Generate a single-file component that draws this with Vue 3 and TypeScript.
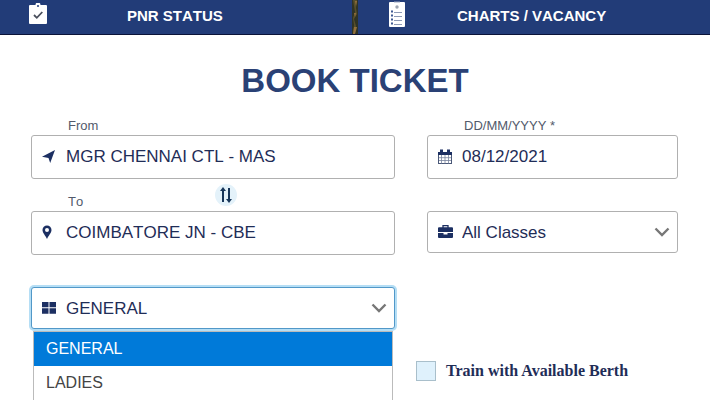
<script setup lang="ts">
import { ref } from 'vue'

const origin = ref('MGR CHENNAI CTL - MAS')
const destination = ref('COIMBATORE JN - CBE')
const date = ref('08/12/2021')
const travelClass = ref('All Classes')
const quotas: string[] = ['GENERAL', 'LADIES']
const quota = ref('GENERAL')
const availableOnly = ref(false)

function swapStations(): void {
  const previous = origin.value
  origin.value = destination.value
  destination.value = previous
}
</script>

<template>
  <div class="page">
    <nav class="tabs">
      <a class="tab" href="#pnr">
        <svg class="tab-icon status-icon" viewBox="0 0 20 22" aria-hidden="true">
          <path d="M2 2h5.500a2.500 2.500 0 0 1 5 0H18a1 1 0 0 1 1 1v17a1 1 0 0 1-1 1H2a1 1 0 0 1-1-1V3a1 1 0 0 1 1-1z" fill="#fff" />
          <circle cx="10" cy="3" r="1" fill="#223c78" />
          <path d="M6 12l2.800 2.800L14.300 9" fill="none" stroke="#4a4f5c" stroke-width="1.800" />
        </svg>
        <span class="tab-text">PNR STATUS</span>
      </a>
      <svg class="divider" viewBox="0 0 6 34" preserveAspectRatio="none" aria-hidden="true">
        <rect width="6" height="34" fill="#2f3325" />
        <path d="M1 0h4l-1 8 1 6-3 5 2 7-1 8H1l1-9-1-7 2-6z" fill="#574f2c" />
        <path d="M3 1h2l-1 5zM2 13h2l-1 4zM2 27h3l-2 7H1z" fill="#92703d" />
      </svg>
      <a class="tab" href="#charts">
        <svg class="tab-icon chart-icon" viewBox="0 0 16 26" aria-hidden="true">
          <rect width="16" height="25" y="1" rx="1" fill="#fff" />
          <path d="M5 1h6" stroke="#9ba7c2" />
          <circle cx="8" cy="6" r="1.700" fill="#9ca4b1" />
          <path d="M2 10.500h2M2 14.500h2M2 18.500h2M2 22.500h2" stroke="#415b91" stroke-width="2" />
          <path d="M5 11.500h8M5 15.500h8M5 19.500h8M5 23.500h8" stroke="#8d9ab5" />
        </svg>
        <span class="tab-text">CHARTS / VACANCY</span>
      </a>
    </nav>

    <main>
      <h1>BOOK TICKET</h1>
      <form class="booking" @submit.prevent>
        <div class="cell">
          <div class="caption"><label for="from">From</label></div>
          <div class="field">
            <svg class="icon" viewBox="0 0 16 16" aria-hidden="true">
              <path d="M13 1L8.200 14 6.500 9 0 7.800z" fill="#1c2f62" />
            </svg>
            <input id="from" v-model="origin" type="text" />
          </div>
        </div>

        <div class="cell">
          <div class="caption"><label for="date">DD/MM/YYYY *</label></div>
          <div class="field">
            <svg class="icon" viewBox="0 0 16 16" aria-hidden="true">
              <rect x=".5" y="3.500" width="13" height="11" fill="#fff" stroke="#4a5878" />
              <path d="M0 3h14v3H0z" fill="#1c2f62" />
              <path d="M3.500 .5v3M10.500 .5v3" stroke="#1c2f62" stroke-width="3" />
              <path d="M3.500 6v8.500M7 6v8.500M10.500 6v8.500M1 8.700h12M1 11.500h12" stroke="#78849e" stroke-width=".8" />
            </svg>
            <input id="date" v-model="date" type="text" />
          </div>
        </div>

        <div class="cell">
          <div class="caption">
            <label for="to">To</label>
            <button class="swap" type="button" aria-label="Swap stations" @click="swapStations">
              <svg viewBox="0 0 14 18" aria-hidden="true">
                <path d="M4 16V3M10 2v13" fill="none" stroke="#17365a" stroke-width="2" />
                <path d="M1 5l3-4 3 4zM7 13l3 4 3-4z" fill="#17365a" />
              </svg>
            </button>
          </div>
          <div class="field">
            <svg class="icon" viewBox="0 0 16 16" aria-hidden="true">
              <path fill-rule="evenodd" d="M5 .5a4.500 4.500 0 0 1 4.500 4.500C9.500 8 6.500 10.500 5 14 3.500 10.500.5 8 .5 5A4.500 4.500 0 0 1 5 .5zM5 3a2 2 0 1 0 0 4A2 2 0 0 0 5 3z" fill="#1c2f62" />
            </svg>
            <input id="to" v-model="destination" type="text" />
          </div>
        </div>

        <div class="cell">
          <div class="caption"></div>
          <div class="field dropdown">
            <svg class="icon" viewBox="0 0 16 16" aria-hidden="true">
              <path d="M5 4V1.700h5V4" fill="none" stroke="#1c2f62" stroke-width="1.300" />
              <path d="M1 3.200h13a1 1 0 0 1 1 1V8H0V4.200a1 1 0 0 1 1-1zM0 9h5.500v1.500h4V9H15v4a1 1 0 0 1-1 1H1a1 1 0 0 1-1-1z" fill="#1c2f62" />
            </svg>
            <select v-model="travelClass" aria-label="Class">
              <option>All Classes</option>
            </select>
            <svg class="chevron" viewBox="0 0 16 10" aria-hidden="true">
              <path d="M1.500 1.500L8 8l6.500-6.500" />
            </svg>
          </div>
        </div>

        <div class="cell">
          <div class="caption"></div>
          <div class="field dropdown focused">
            <svg class="icon" viewBox="0 0 16 16" aria-hidden="true">
              <path d="M0 2h6.500v5.300H0zM7.500 2H14v5.300H7.500zM0 8.300h6.500v5.500H0zM7.500 8.300H14v5.500H7.500z" fill="#1c2f62" />
            </svg>
            <select v-model="quota" aria-label="Quota">
              <option v-for="name in quotas" :key="name">{{ name }}</option>
            </select>
            <svg class="chevron" viewBox="0 0 16 10" aria-hidden="true">
              <path d="M1.500 1.500L8 8l6.500-6.500" />
            </svg>
            <ul class="options" role="listbox" aria-label="Quota">
              <li
                v-for="name in quotas"
                :key="name"
                role="option"
                :aria-selected="name === quota"
                :class="{ selected: name === quota }"
                @click="quota = name"
              >
                {{ name }}
              </li>
            </ul>
          </div>
        </div>

        <label class="check">
          <input v-model="availableOnly" type="checkbox" />
          <span>Train with Available Berth</span>
        </label>
      </form>
    </main>
  </div>
</template>

<style>
body {
  background: #fff;
}
</style>

<style scoped>
.page {
  height: 100vh;
  overflow: hidden;
  font-family: "Liberation Sans", Arial, sans-serif;
  color: #1f2d57;
}
.tabs {
  display: flex;
  height: 35px;
  box-sizing: border-box;
  background: #223c78;
  border-bottom: 1px solid #0b1338;
}
.tab {
  display: flex;
  flex: 1;
  align-items: center;
  color: #fff;
  font-size: 15px;
  font-weight: bold;
  font-kerning: none;
  text-decoration: none;
}
.tab-text {
  padding-bottom: 3px;
}
.tab-icon {
  flex: none;
}
.status-icon {
  width: 20px;
  height: 22px;
  margin: 0 79px 6px 28px;
}
.chart-icon {
  width: 16px;
  height: 26px;
  margin: 0 52px 6px 31px;
}
.divider {
  width: 6px;
  height: 34px;
}
h1 {
  margin: 0;
  padding: 27px 0 4px;
  font-size: 33px;
  line-height: 37px;
  text-align: center;
  color: #2a4175;
}
.booking {
  display: grid;
  grid-template-columns: minmax(0, 364fr) minmax(0, 251fr);
  column-gap: 32px;
  padding: 0 32px 0 31px;
}
.caption {
  display: flex;
  align-items: flex-end;
  height: 32px;
}
.caption label {
  flex: 0 0 147px;
  padding: 0 0 1px 37px;
  font-size: 13px;
  font-kerning: none;
  line-height: 16px;
  color: #525a6b;
}
.swap {
  display: flex;
  align-items: center;
  justify-content: center;
  align-self: center;
  width: 22px;
  height: 22px;
  padding: 0;
  border: 0;
  border-radius: 50%;
  background: #e4f2fa;
}
.swap svg {
  width: 14px;
  height: 18px;
}
.field {
  position: relative;
  display: flex;
  align-items: center;
  height: 44px;
  box-sizing: border-box;
  padding: 0 7px 0 10px;
  border: 1px solid #b0b0b0;
  border-radius: 3px;
  background: #fff;
}
.dropdown {
  height: 42px;
}
.focused {
  border-color: #5298c8;
  box-shadow: 0 0 0 2px #b5def5;
}
.icon {
  flex: none;
  width: 16px;
  height: 16px;
  margin-right: 8px;
}
.field input,
.field select {
  flex: 1;
  min-width: 0;
  height: 40px;
  margin: 0;
  padding: 0;
  border: 0;
  outline: 0;
  background: transparent;
  appearance: none;
  font-family: inherit;
  font-size: 17px;
  font-kerning: none;
  color: #1f2d57;
}
.chevron {
  flex: none;
  width: 16px;
  height: 10px;
  pointer-events: none;
}
.chevron path {
  fill: none;
  stroke: #777;
  stroke-width: 2.4;
}
.options {
  position: absolute;
  z-index: 1;
  top: 43px;
  left: 1px;
  right: 1px;
  min-height: 102px;
  margin: 0;
  padding: 0;
  border: 1px solid #bbb;
  background: #fff;
  list-style: none;
  font-size: 16px;
  font-kerning: none;
  color: #444;
}
.options li {
  padding: 0 12px;
  line-height: 34px;
}
.options .selected {
  background: #007ad9;
  color: #fff;
}
.check {
  display: flex;
  align-items: center;
  align-self: end;
  gap: 10px;
  height: 20px;
  margin: 0 0 -52px -11px;
  font-family: "Liberation Serif", "Times New Roman", serif;
  font-size: 16px;
  font-weight: bold;
  color: #1f2d57;
  white-space: nowrap;
}
.check input {
  width: 20px;
  height: 20px;
  margin: 0;
  appearance: none;
  border: 1px solid #a9bfcb;
  background: #dff1fc;
}
.check input:checked {
  background: #223c78;
}
</style>
